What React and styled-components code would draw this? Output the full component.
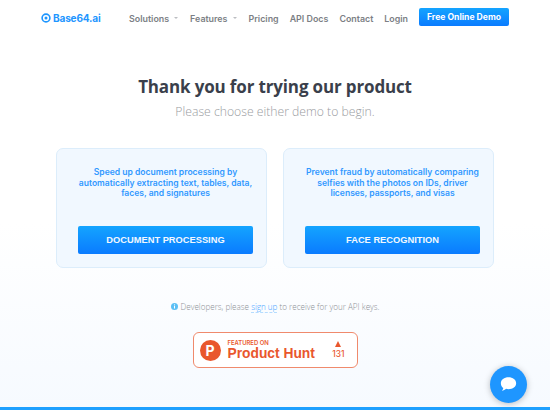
import React from 'react';
import styled, { createGlobalStyle } from 'styled-components';

const cards = [
  {
    text: 'Speed up document processing by automatically extracting text, tables, data, faces, and signatures',
    button: 'DOCUMENT PROCESSING',
  },
  {
    text: 'Prevent fraud by automatically comparing selfies with the photos on IDs, driver licenses, passports, and visas',
    button: 'FACE RECOGNITION',
  },
];

const App = () => (
  <Page>
    <GlobalStyle />
    <Header>
      <Logo>
        <svg width='10' height='10' viewBox='0 0 10 10'>
          <circle cx='5' cy='5' r='3.9' fill='none' stroke='#1e96ff' strokeWidth='1.6' />
          <circle cx='5' cy='5' r='1.5' fill='#1e96ff' />
        </svg>
        Base64.ai
      </Logo>
      <Nav>
        <NavLink $caret>Solutions</NavLink>
        <NavLink $caret>Features</NavLink>
        <NavLink>Pricing</NavLink>
        <NavLink>API Docs</NavLink>
        <NavLink>Contact</NavLink>
        <NavLink>Login</NavLink>
      </Nav>
      <DemoButton>Free Online Demo</DemoButton>
    </Header>
    <Main>
      <Title>Thank you for trying our product</Title>
      <Subtitle>Please choose either demo to begin.</Subtitle>
      <Cards>
        {cards.map((card) => (
          <Card key={card.button}>
            <CardText>{card.text}</CardText>
            <CardButton>{card.button}</CardButton>
          </Card>
        ))}
      </Cards>
      <Note>
        <svg width='7' height='7' viewBox='0 0 8 8'>
          <circle cx='4' cy='4' r='4' fill='#5cc0f5' />
          <rect x='3.4' y='3.3' width='1.2' height='3' fill='#fff' />
          <rect x='3.4' y='1.6' width='1.2' height='1.1' fill='#fff' />
        </svg>
        <span>
          Developers, please <SignUp>sign up</SignUp> to receive for your API keys.
        </span>
      </Note>
      <Badge>
        <BadgeLogo>P</BadgeLogo>
        <BadgeText>
          <small>FEATURED ON</small>
          <strong>Product Hunt</strong>
        </BadgeText>
        <Votes>
          <Triangle />
          131
        </Votes>
      </Badge>
    </Main>
    <ChatButton>
      <svg width='19' height='17' viewBox='0 0 22 20'>
        <path
          d='M11 1.5c5 0 9 2.9 9 7s-4 7-9 7c-1 0-2-.1-2.900-.4C6.800 16.300 5.200 17.200 3.200 17.400c.9-.9 1.500-2 1.700-3.200C3 12.900 2 10.900 2 8.500c0-4.100 4-7 9-7z'
          fill='#fff'
        />
      </svg>
    </ChatButton>
  </Page>
);

export default App;

const GlobalStyle = createGlobalStyle`
  html, body {
    margin: 0;
    padding: 0;
  }
`;

const Page = styled.div`
  width: 550px;
  height: 410px;
  box-sizing: border-box;
  overflow: hidden;
  position: relative;
  display: flex;
  flex-direction: column;
  background: linear-gradient(180deg, #ffffff 0%, #ffffff 55%, #f6faff 100%);
  border-bottom: 3px solid #1ea0ff;
  font-family: 'Inter', 'Liberation Sans', sans-serif;
`;

const Header = styled.header`
  height: 36px;
  flex: none;
  display: flex;
  align-items: center;
  padding: 0 41px 1px 41px;
`;

const Logo = styled.div`
  display: flex;
  align-items: center;
  gap: 2px;
  width: 88px;
  font-size: 10.1px;
  font-weight: 700;
  letter-spacing: -0.2px;
  color: #1e96ff;
`;

const Nav = styled.nav`
  display: flex;
  align-items: center;
  gap: 11px;
  flex: 1;
`;

const NavLink = styled.span`
  font-size: 8.9px;
  font-weight: 600;
  color: #7c7f85;
  white-space: nowrap;
  margin-right: ${(p) => (p.$caret ? '10px' : '0')};
  position: relative;

  &::after {
    content: ${(p) => (p.$caret ? "''" : 'none')};
    position: absolute;
    right: -9px;
    top: 4px;
    border-left: 2px solid transparent;
    border-right: 2px solid transparent;
    border-top: 2.5px solid #bcbec2;
  }
`;

const DemoButton = styled.div`
  width: 90px;
  height: 18px;
  margin-top: -3px;
  display: flex;
  align-items: center;
  justify-content: center;
  border-radius: 2px;
  background: linear-gradient(180deg, #14a4ff 0%, #0a7bff 100%);
  color: #fff;
  font-size: 8.6px;
  font-weight: 700;
  white-space: nowrap;
`;

const Main = styled.main`
  flex: 1;
  display: flex;
  flex-direction: column;
  align-items: center;
`;

const Title = styled.h1`
  margin: 37px 0 0;
  font-family: 'Open Sans', 'Liberation Sans', sans-serif;
  font-size: 17px;
  line-height: 25px;
  font-weight: 700;
  letter-spacing: -0.15px;
  color: #3a3f4b;
`;

const Subtitle = styled.p`
  margin: 4px 0 0;
  font-family: 'Open Sans', 'Liberation Sans', sans-serif;
  font-size: 12.2px;
  line-height: 17px;
  font-weight: 300;
  color: #9a9ca1;
`;

const Cards = styled.div`
  display: flex;
  gap: 16px;
  margin-top: 28px;
`;

const Card = styled.div`
  width: 211px;
  height: 120px;
  box-sizing: border-box;
  border: 1px solid #dcedfb;
  border-radius: 7px;
  background: #f1f8ff;
  padding: 18px 13px 13px 21px;
  display: flex;
  flex-direction: column;
  align-items: center;
  justify-content: space-between;
`;

const CardText = styled.p`
  margin: 0;
  font-size: 8.55px;
  line-height: 10.5px;
  font-weight: 600;
  text-align: center;
  color: #3298ff;
`;

const CardButton = styled.div`
  align-self: stretch;
  height: 28px;
  display: flex;
  align-items: center;
  justify-content: center;
  border-radius: 2px;
  background: linear-gradient(180deg, #14a4ff 0%, #0a7bff 100%);
  color: #f2f8ff;
  font-family: 'Liberation Sans', sans-serif;
  font-size: 9.3px;
  font-weight: 700;
`;

const Note = styled.div`
  margin-top: 33px;
  display: flex;
  align-items: center;
  gap: 3px;
  font-family: 'Open Sans', 'Liberation Sans', sans-serif;
  font-size: 8.1px;
  font-weight: 300;
  color: #8e9196;
`;

const SignUp = styled.span`
  color: #3b9eff;
  border-bottom: 1px dashed #b5dcff;
`;

const Badge = styled.div`
  width: 165px;
  height: 36px;
  box-sizing: border-box;
  margin-top: 20px;
  border: 1px solid #f08a6c;
  border-radius: 6px;
  background: #fff;
  display: flex;
  align-items: center;
  padding: 0 12px 0 6px;
`;

const BadgeLogo = styled.div`
  width: 21px;
  height: 21px;
  flex: none;
  border-radius: 50%;
  background: #e9572d;
  color: #fff;
  font-size: 14px;
  font-weight: 700;
  display: flex;
  align-items: center;
  justify-content: center;
`;

const BadgeText = styled.div`
  flex: 1;
  margin-left: 7px;
  display: flex;
  flex-direction: column;
  color: #e9572d;

  small {
    font-size: 5.9px;
    line-height: 7px;
    font-weight: 600;
  }

  strong {
    font-size: 13.8px;
    line-height: 15px;
    font-weight: 700;
    font-family: 'Liberation Sans', sans-serif;
  }
`;

const Votes = styled.div`
  display: flex;
  flex-direction: column;
  align-items: center;
  gap: 3px;
  font-size: 8.4px;
  line-height: 9px;
  font-weight: 500;
  color: #e9572d;
`;

const Triangle = styled.span`
  border-left: 3.5px solid transparent;
  border-right: 3.5px solid transparent;
  border-bottom: 6px solid #e9572d;
`;

const ChatButton = styled.div`
  position: absolute;
  right: 23px;
  bottom: 4px;
  width: 37px;
  height: 37px;
  border-radius: 50%;
  background: #1e96ff;
  box-shadow: 0 1px 6px rgba(0, 0, 0, 0.25);
  display: flex;
  align-items: center;
  justify-content: center;
`;
